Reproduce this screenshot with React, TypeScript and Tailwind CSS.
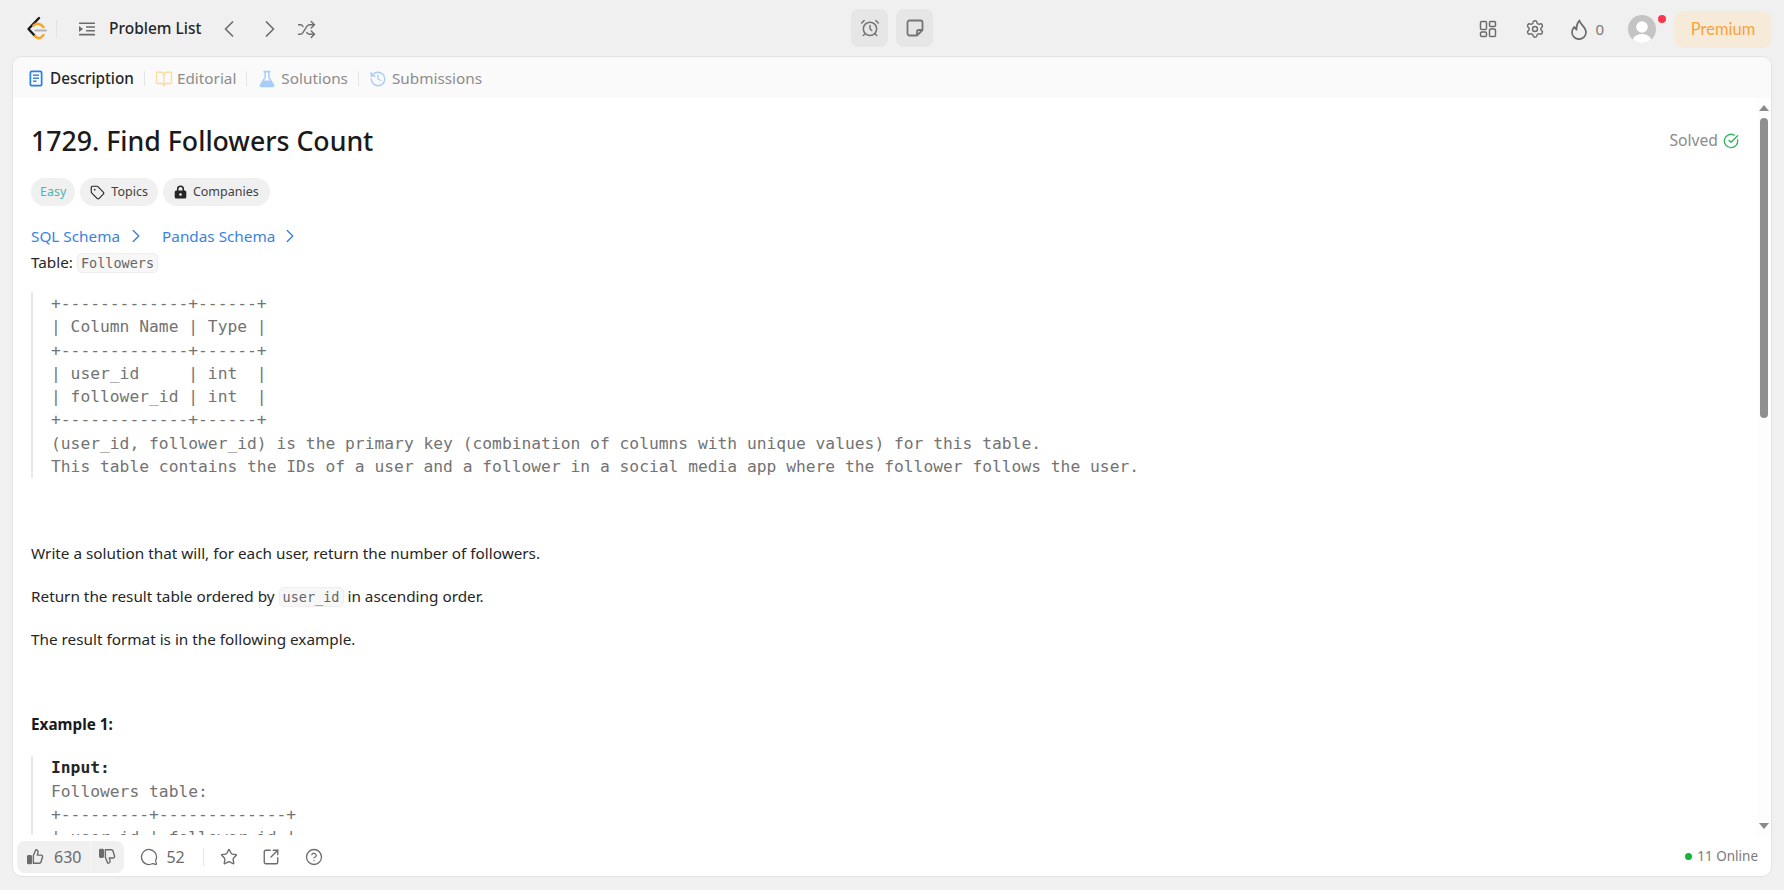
import {
  BookOpen,
  ChevronRight,
  AlarmClock,
  History,
  MessageCircle,
  Settings,
  Shuffle,
  Star,
  SquareArrowOutUpRight,
  CircleHelp,
  Tag,
  CircleCheckBig,
} from "lucide-react";

const Logo = () => (
  <svg width="22" height="26" viewBox="0 0 22 26" fill="none" strokeLinecap="round" strokeLinejoin="round">
    <path d="M13 2 L2.5 13 L9 20" stroke="#1a1a1a" strokeWidth="2.4" />
    <path d="M7.5 9.5 Q11 6.5 14.5 8.5 L17.5 11" stroke="#f5a623" strokeWidth="2.4" />
    <path d="M9 20 Q12 23.5 15 21.5 L17.5 19" stroke="#f5a623" strokeWidth="2.4" />
    <path d="M9.5 14.5 H20" stroke="#b3b3b3" strokeWidth="2.2" />
  </svg>
);

const ListIcon = () => (
  <svg width="18" height="14" viewBox="0 0 18 14" fill="#6b6b6b">
    <rect x="1" y="0.5" width="16" height="1.6" rx="0.5" />
    <rect x="8" y="4.2" width="9" height="1.6" rx="0.5" />
    <rect x="8" y="8" width="9" height="1.6" rx="0.5" />
    <rect x="1" y="11.8" width="16" height="1.6" rx="0.5" />
    <path d="M1 4 L5 7 L1 10 Z" />
  </svg>
);

const NoteIcon = () => (
  <svg width="18" height="18" viewBox="0 0 18 18" fill="none" stroke="#757575" strokeWidth="1.8" strokeLinejoin="round">
    <path d="M3.5 1.5 H14.5 A2 2 0 0 1 16.5 3.5 V11 L11 16.5 H3.5 A2 2 0 0 1 1.5 14.5 V3.5 A2 2 0 0 1 3.5 1.5 Z" />
    <path d="M11 16.5 V12.5 A1.5 1.5 0 0 1 12.5 11 H16.5" />
  </svg>
);

const PanelsIcon = () => (
  <svg width="18" height="18" viewBox="0 0 18 18" fill="none" stroke="#6b6b6b" strokeWidth="1.5">
    <rect x="1.5" y="1.5" width="6" height="8" rx="1.3" />
    <rect x="10.5" y="1.5" width="6" height="5" rx="1.3" />
    <rect x="1.5" y="12" width="6" height="4.5" rx="1.3" />
    <rect x="10.5" y="9" width="6" height="7.5" rx="1.3" />
  </svg>
);

const DocIcon = () => (
  <svg width="14" height="17" viewBox="0 0 14 17">
    <rect x="0.5" y="0.5" width="13" height="16" rx="2.2" fill="#2a7fe8" />
    <rect x="2.2" y="2.2" width="9.6" height="12.6" rx="0.8" fill="#fafafa" />
    <rect x="4" y="4.5" width="6" height="1.4" fill="#2a7fe8" />
    <rect x="4" y="7.5" width="6" height="1.4" fill="#2a7fe8" />
    <rect x="4" y="10.5" width="3.5" height="1.4" fill="#2a7fe8" />
  </svg>
);

const FlaskIcon = () => (
  <svg width="16" height="18" viewBox="0 0 16 18">
    <path d="M4.5 0.8 H11.5 V2.4 H10.6 V7 L15.2 14.8 A1.6 1.6 0 0 1 13.8 17.2 H2.2 A1.6 1.6 0 0 1 0.8 14.8 L5.4 7 V2.4 H4.5 Z" fill="#a8cdf7" />
    <path d="M6.9 2.4 H9.1 V7.6 L11 10.5 H5 L6.9 7.6 Z" fill="#fafafa" />
  </svg>
);

const FlameIcon = () => (
  <svg width="16" height="21" viewBox="0 0 16 21" fill="none" stroke="#6b6b6b" strokeWidth="1.7" strokeLinejoin="round">
    <path d="M8.5 1.5 C9 5.5 15 8 15 13.2 A7 7 0 0 1 1 13.2 C1 10.8 2.2 9 3.4 7.8 C3.8 9.2 4.5 10.2 5.6 10.7 C5.2 7.2 6.2 4 8.5 1.5 Z" />
  </svg>
);

const Chevron = ({ flip }: { flip?: boolean }) => (
  <svg width="10" height="16" viewBox="0 0 10 16" fill="none" stroke="#6e6e6e" strokeWidth="1.7" strokeLinecap="round" strokeLinejoin="round">
    <path d={flip ? "M1.5 1 L8.5 8 L1.5 15" : "M8.5 1 L1.5 8 L8.5 15"} />
  </svg>
);

const Thumb = ({ down }: { down?: boolean }) => (
  <svg width="17" height="17" viewBox="0 0 24 24" fill="none" stroke="#6b6b6b" strokeWidth="2" strokeLinejoin="round" className={down ? "-scale-y-100" : ""}>
    <rect x="1" y="11" width="5" height="11" rx="1" fill="#6b6b6b" />
    <path d="M9 10.5 L12.5 2.5 A3 3 0 0 1 15.5 6.5 L14.5 10 H20 A2 2 0 0 1 21.9 12.6 L19.6 20.1 A2 2 0 0 1 17.7 21.5 H9 Z" />
  </svg>
);

const Avatar = () => (
  <svg width="28" height="28" viewBox="0 0 28 28">
    <defs>
      <clipPath id="av">
        <circle cx="14" cy="14" r="14" />
      </clipPath>
    </defs>
    <circle cx="14" cy="14" r="14" fill="#c4c4c4" />
    <g clipPath="url(#av)" fill="#fff">
      <circle cx="14" cy="12" r="5.8" />
      <ellipse cx="14" cy="26" rx="9.5" ry="7" />
    </g>
  </svg>
);

const Divider = () => <div className="mx-[10px] h-[15px] w-px bg-[#e5e5e5]" />;

const tableOne = `+-------------+------+
| Column Name | Type |
+-------------+------+
| user_id     | int  |
| follower_id | int  |
+-------------+------+
(user_id, follower_id) is the primary key (combination of columns with unique values) for this table.
This table contains the IDs of a user and a follower in a social media app where the follower follows the user.`;

const tableTwo = `Followers table:
+---------+-------------+
| user_id | follower_id |`;

const inlineCode =
  "rounded-[5px] border border-[#eeeeee] bg-[#f7f7f7] px-[3px] py-[1px] text-[13.5px] leading-[16px] text-[#666666] [font-family:'DejaVu_Sans_Mono',monospace]";

export default function App() {
  return (
    <div className="flex h-[890px] w-[1784px] flex-col overflow-hidden bg-[#f0f0f0] text-[#262626] [font-family:'Noto_Sans',sans-serif]">
      <header className="relative flex h-[56px] shrink-0 items-center justify-between pl-[26px] pr-[12px] pt-[2px]">
        <div className="flex items-center">
          <Logo />
          <div className="ml-[8px] h-[18px] w-px bg-[#e3e3e3]" />
          <div className="ml-[21px]">
            <ListIcon />
          </div>
          <span className="ml-[13px] text-[15.5px] font-medium text-[#262626]">Problem List</span>
          <div className="ml-[22px]">
            <Chevron />
          </div>
          <div className="ml-[31px]">
            <Chevron flip />
          </div>
          <Shuffle className="ml-[22px]" size={19} color="#6e6e6e" strokeWidth={1.8} />
        </div>
        <div className="absolute left-[851px] top-[9px] flex gap-[8px]">
          <div className="flex h-[38px] w-[37px] items-center justify-center rounded-[8px] bg-[#e6e6e6]">
            <AlarmClock size={20} color="#757575" strokeWidth={1.8} />
          </div>
          <div className="flex h-[38px] w-[37px] items-center justify-center rounded-[8px] bg-[#e6e6e6]">
            <NoteIcon />
          </div>
        </div>
        <div className="flex items-center">
          <PanelsIcon />
          <Settings className="ml-[28px]" size={20} color="#6b6b6b" strokeWidth={1.7} />
          <div className="ml-[26px]">
            <FlameIcon />
          </div>
          <span className="ml-[8px] text-[15px] text-[#7a7a7a]">0</span>
          <div className="relative ml-[24px]">
            <Avatar />
            <div className="absolute right-[-10px] top-0 h-[8px] w-[8px] rounded-full bg-[#f8394d]" />
          </div>
          <div className="ml-[18px] flex h-[37px] w-[98px] items-center justify-center rounded-[10px] bg-[#f6ead9] text-[16.5px] text-[#f9a23c] [font-family:'Lato',sans-serif]">
            Premium
          </div>
        </div>
      </header>

      <main className="mx-[12px] flex h-[821px] flex-col overflow-hidden rounded-[10px] border border-[#e3e3e3] bg-white">
        <nav className="flex h-[41px] shrink-0 items-center bg-[#fafafa] pl-[16px] pt-[2px] text-[15.3px] text-[#8c8c8c]">
          <DocIcon />
          <span className="ml-[7px] font-medium text-[#262626]">Description</span>
          <Divider />
          <BookOpen size={18} color="#f8dca0" strokeWidth={1.8} />
          <span className="ml-[4px]">Editorial</span>
          <Divider />
          <div className="ml-[2px]">
            <FlaskIcon />
          </div>
          <span className="ml-[6px]">Solutions</span>
          <Divider />
          <History size={18} color="#a8cdf7" strokeWidth={1.8} />
          <span className="ml-[5px]">Submissions</span>
        </nav>

        <div className="flex min-h-0 flex-1">
          <div className="min-w-0 flex-1 overflow-hidden px-[18px] pt-[23px]">
            <div className="flex items-center justify-between">
              <h1 className="text-[26.7px] font-medium leading-[40px] text-[#1a1a1a]">1729. Find Followers Count</h1>
              <div className="flex items-center gap-[5px] text-[15.7px] text-[#8c8c8c]">
                Solved
                <CircleCheckBig size={16} color="#2cbb5d" strokeWidth={2} />
              </div>
            </div>

            <div className="mt-[17px] flex gap-[5px] text-[12.5px] leading-[28px] text-[#404040]">
              <span className="h-[28px] rounded-full bg-[#f0f0f0] px-[9px] text-[#4fb5b0]">Easy</span>
              <span className="flex h-[28px] items-center gap-[6px] rounded-full bg-[#f0f0f0] px-[10px]">
                <Tag size={15} color="#262626" strokeWidth={1.8} />
                Topics
              </span>
              <span className="flex h-[28px] items-center gap-[6px] rounded-full bg-[#f0f0f0] px-[11px]">
                <svg width="13" height="14" viewBox="0 0 13 14" fill="#262626">
                  <path d="M6.5 0.5 A3.6 3.6 0 0 0 2.9 4.1 V5.5 H2.2 A1.5 1.5 0 0 0 0.7 7 V12 A1.5 1.5 0 0 0 2.2 13.5 H10.8 A1.5 1.5 0 0 0 12.3 12 V7 A1.5 1.5 0 0 0 10.8 5.5 H10.1 V4.1 A3.6 3.6 0 0 0 6.5 0.5 Z M4.5 5.5 V4.1 A2 2 0 0 1 8.5 4.1 V5.5 Z" fillRule="evenodd" />
                  <circle cx="6.5" cy="9.5" r="1.3" fill="#f0f0f0" />
                </svg>
                Companies
              </span>
            </div>

            <div className="mt-[17px] flex items-center text-[15.3px] leading-[26px] text-[#3b82e0]">
              <span>SQL Schema</span>
              <ChevronRight className="ml-[5px]" size={22} strokeWidth={1.5} />
              <span className="ml-[15px]">Pandas Schema</span>
              <ChevronRight className="ml-[4px]" size={22} strokeWidth={1.5} />
            </div>
            <p className="text-[15.3px] leading-[26px] text-[#262626]">
              Table: <code className={inlineCode}>Followers</code>
            </p>

            <pre className="mt-[17px] border-l-2 border-[#e8e8e8] pl-[18px] text-[16.3px] leading-[23.3px] text-[#737373] [font-family:'DejaVu_Sans_Mono',monospace]">
              {tableOne}
            </pre>

            <p className="mt-[63px] text-[15.3px] leading-[24px]">Write a solution that will, for each user, return the number of followers.</p>
            <p className="mt-[19px] text-[15.3px] leading-[24px]">
              Return the result table ordered by <code className={inlineCode}>user_id</code> in ascending order.
            </p>
            <p className="mt-[19px] text-[15.3px] leading-[24px]">The result format is in the following example.</p>

            <p className="mt-[61px] text-[15.3px] font-bold leading-[24px] text-[#1a1a1a]">Example 1:</p>
            <div className="mt-[20px] border-l-2 border-[#e8e8e8] pl-[18px] text-[16.3px] leading-[23.3px] text-[#737373] [font-family:'DejaVu_Sans_Mono',monospace]">
              <div className="font-bold text-[#262626]">Input:</div>
              <pre className="[font-family:'DejaVu_Sans_Mono',monospace]">{tableTwo}</pre>
            </div>
          </div>

          <div className="flex w-[14px] shrink-0 flex-col items-center bg-[#fdfdfd] pb-[6px] pt-[7px]">
            <div className="h-0 w-0 border-x-[5px] border-b-[6px] border-x-transparent border-b-[#8a8a8a]" />
            <div className="mt-[7px] h-[300px] w-[8px] rounded-full bg-[#8f8f8f]" />
            <div className="flex-1" />
            <div className="h-0 w-0 border-x-[5px] border-t-[6px] border-x-transparent border-t-[#8a8a8a]" />
          </div>
        </div>

        <footer className="flex h-[41px] shrink-0 items-center justify-between pl-[4px] pr-[13px] pt-[2px]">
          <div className="flex items-center text-[#6b6b6b]">
            <div className="flex h-[32px] items-center overflow-hidden rounded-[8px] bg-[#f0f0f0]">
              <div className="flex h-full items-center gap-[10px] pl-[10px] pr-[9px]">
                <Thumb />
                <span className="text-[16px]">630</span>
              </div>
              <div className="h-full w-px bg-[#f8f8f8]" />
              <div className="flex h-full items-center px-[8px]">
                <Thumb down />
              </div>
            </div>
            <MessageCircle className="ml-[16px] -scale-x-100" size={18} strokeWidth={1.7} />
            <span className="ml-[8px] text-[16px]">52</span>
            <div className="ml-[18px] h-[18px] w-px bg-[#e5e5e5]" />
            <Star className="ml-[16px]" size={18} strokeWidth={1.8} />
            <SquareArrowOutUpRight className="ml-[24px]" size={18} strokeWidth={1.8} />
            <CircleHelp className="ml-[25px]" size={18} strokeWidth={1.7} />
          </div>
          <div className="flex items-center gap-[5px] text-[13.5px] text-[#7a7a7a]">
            <div className="h-[7px] w-[7px] rounded-full bg-[#14b338]" />
            11 Online
          </div>
        </footer>
      </main>
    </div>
  );
}
